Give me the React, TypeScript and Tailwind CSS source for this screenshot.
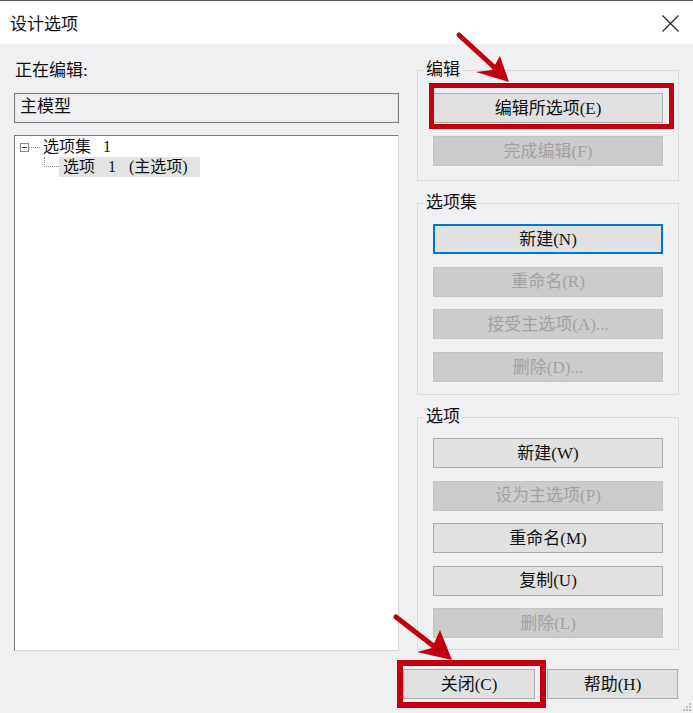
const cjk = "font-['Liberation_Serif','Noto_Sans_CJK_SC',serif]"

function Btn({ label, disabled, focused }: { label: string; disabled?: boolean; focused?: boolean }) {
  let cls = 'h-[30px] w-full flex items-center justify-center text-[17px] leading-none '
  if (disabled) cls += 'bg-[#cccccc] border border-[#c4c4c4] text-[#a2a2a2]'
  else if (focused) cls += 'bg-[#e1e1e1] border-2 border-[#0078d7] text-[#111]'
  else cls += 'bg-[#e1e1e1] border border-[#adadad] text-[#111]'
  return <div className={cls}>{label}</div>
}

function Group({ title, children, className }: { title: string; children: React.ReactNode; className?: string }) {
  return (
    <fieldset className={'border border-[#dadada] px-[15px] ' + (className ?? '')}>
      <legend className="ml-[-9px] px-[2px] h-[22px] leading-[22px] text-[17px] text-[#111]">{title}</legend>
      {children}
    </fieldset>
  )
}

export default function App() {
  return (
    <div className={`relative w-[693px] h-[713px] overflow-hidden bg-[#f0eff2] ${cjk}`}>
      {/* Title bar */}
      <div className="h-[44px] bg-white border-t border-[#5a5a5a] flex items-center justify-between pl-[10px] pr-[14px]">
        <span className="font-['Noto_Sans_CJK_SC',sans-serif] text-[17px] text-[#111]">设计选项</span>
        <svg width="17" height="17" viewBox="0 0 17 17" className="mt-[1px]">
          <path d="M0.5 0.5L16.5 16.5M16.5 0.5L0.5 16.5" stroke="#222" strokeWidth="1.1" />
        </svg>
      </div>

      <div className="flex pl-[14px]">
        {/* Left column */}
        <div className="w-[385px] pt-[16px] flex flex-col">
          <div className="h-[22px] leading-[22px] text-[17px] text-[#111] pl-[1px]">正在编辑:</div>
          <div className="mt-[11px] h-[30px] border border-[#7f7f7f] shadow-[inset_0_0_0_1px_#e6e6e6] bg-[#f0eff2] px-[5px] text-[17px] leading-[26px] text-[#111]">
            主模型
          </div>
          <div className="mt-[12px] h-[516px] bg-white border border-[#d6d6d6] border-l-[#7a7a7a] border-t-[#7a7a7a] pt-[1px] text-[16px] text-[#111]">
            <div className="flex items-center h-[20px] pl-[5px]">
              <div className="w-[9px] h-[9px] border border-[#8a8a8a] flex items-center justify-center">
                <div className="w-[5px] h-px bg-[#333]" />
              </div>
              <div className="w-[11px] border-t border-dotted border-[#8a8a8a]" />
              <span className="ml-[3px]">选项集</span>
              <span className="ml-[12px]">1</span>
            </div>
            <div className="flex h-[20px]">
              <div className="ml-[29px] w-[15px] h-[10px] border-l border-b border-dotted border-[#8a8a8a]" />
              <div className="flex h-[20px] leading-[20px] bg-[#e3e3e3] pl-[4px] pr-[12px]">
                <span>选项</span>
                <span className="ml-[13px]">1</span>
                <span className="ml-[13px]">(主选项)</span>
              </div>
            </div>
          </div>
        </div>

        {/* Right column */}
        <div className="ml-[18px] w-[262px] pt-[15px] flex flex-col">
          <Group title="编辑" className="pt-[12px] pb-[14px]">
            <div className="flex flex-col gap-[13px]">
              <Btn label="编辑所选项(E)" />
              <Btn label="完成编辑(F)" disabled />
            </div>
          </Group>
          <Group title="选项集" className="mt-[11px] pt-[10px] pb-[12px]">
            <div className="flex flex-col gap-[12.7px]">
              <Btn label="新建(N)" focused />
              <Btn label="重命名(R)" disabled />
              <Btn label="接受主选项(A)..." disabled />
              <Btn label="删除(D)..." disabled />
            </div>
          </Group>
          <Group title="选项" className="mt-[11px] pt-[10px] pb-[11px]">
            <div className="flex flex-col gap-[12.5px]">
              <Btn label="新建(W)" />
              <Btn label="设为主选项(P)" disabled />
              <Btn label="重命名(M)" />
              <Btn label="复制(U)" />
              <Btn label="删除(L)" disabled />
            </div>
          </Group>
        </div>
      </div>

      {/* Bottom buttons */}
      <div className="mt-[18px] flex justify-end gap-[12px] pr-[15px]">
        <div className="w-[132px]"><Btn label="关闭(C)" /></div>
        <div className="w-[131px]"><Btn label="帮助(H)" /></div>
      </div>

      {/* Resize grip */}
      <svg width="10" height="10" viewBox="0 0 10 10" className="absolute right-[2px] bottom-[2px]">
        {[[8, 2], [8, 5], [8, 8], [5, 5], [5, 8], [2, 8]].map(([x, y], i) => (
          <rect key={i} x={x} y={y} width="2" height="2" fill="#bdbdbd" />
        ))}
      </svg>

      {/* Red annotations */}
      <div className="absolute left-[429px] top-[83px] w-[245px] h-[46px] border-[5px] border-[#c00010]" />
      <div className="absolute left-[397px] top-[660px] w-[149px] h-[48px] border-[6px] border-[#c00010]" />
      <svg className="absolute left-0 top-0 pointer-events-none" width="693" height="713">
        <line x1="459" y1="35" x2="495" y2="68" stroke="#c00010" strokeWidth="5" strokeLinecap="round" />
        <polygon points="476,72 509,82 500,56 492,70" fill="#c00010" />
        <line x1="396" y1="617" x2="436" y2="648" stroke="#c00010" strokeWidth="5" strokeLinecap="round" />
        <polygon points="417,652 452,660 440,630 432,648" fill="#c00010" />
      </svg>
    </div>
  )
}
